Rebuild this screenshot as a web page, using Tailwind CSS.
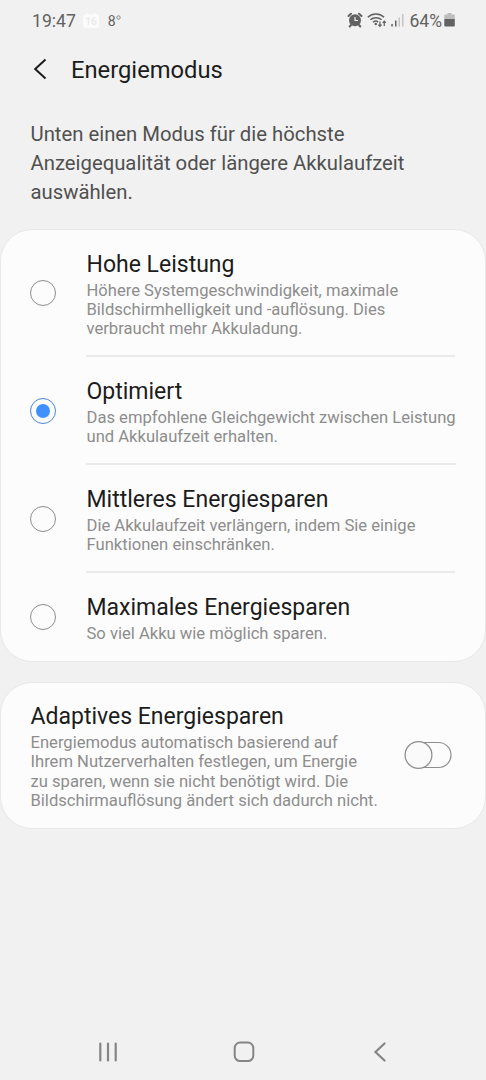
<!DOCTYPE html>
<html lang="de">
<head>
    <meta charset="UTF-8">
    <meta name="viewport" content="width=device-width, initial-scale=1.0">
    <title>Energiemodus</title>

    <script src="https://cdn.jsdelivr.net/npm/@tailwindcss/browser@4"></script>
</head>
<body class="bg-[#f1f1f1] font-[Roboto,sans-serif] text-[#1c1c1c]">
    <div class="flex flex-col w-[486px] h-[1080px] overflow-hidden">

        <!-- Status Bar -->
        <div class="flex items-center justify-between h-[41px] pl-8 pr-[31px] text-[#626262]">
            <div class="flex items-center">
                <span class="text-[17.6px] leading-5">19:47</span>
                <svg class="ml-[6px] w-[18px] h-[18px]" viewBox="0 0 18 18">
                    <path d="M3 2.500h1.500V1h2v1.500h5V1h2v1.500H15a2 2 0 0 1 2 2V14a2 2 0 0 1-2 2H3a2 2 0 0 1-2-2V4.500a2 2 0 0 1 2-2z" fill="#fbfbfb"/>
                    <text x="9" y="13" text-anchor="middle" font-size="10" font-weight="700" fill="#ebebeb">16</text>
                </svg>
                <span class="ml-2 text-[14px] leading-5">8</span>
                <svg class="mb-[6px] w-[5px] h-[5px]" viewBox="0 0 5 5" fill="none" stroke="#7a7a7a" stroke-width=".9">
                    <circle cx="2.500" cy="2.500" r="1.700"/>
                </svg>
            </div>
            <div class="flex items-center">
                <!-- Alarm -->
                <svg class="w-4 h-4 -mt-[2px]" viewBox="0 0 16 16" fill="none">
                    <circle cx="8" cy="8.200" r="6" fill="#626262"/>
                    <path d="M1.500 4 4 1.700M14.500 4 12 1.700M4 13l-1.300 1.500M12 13l1.300 1.500" stroke="#626262" stroke-width="2" stroke-linecap="round"/>
                    <path d="M8 5v3.500h3" stroke="#f1f1f1" stroke-width="1.200"/>
                </svg>
                <!-- WLAN -->
                <svg class="ml-[4px] w-[20px] h-4 -mt-[2px]" viewBox="0 0 19 16" preserveAspectRatio="none" fill="none" stroke="#626262">
                    <path d="M.8 5.200C5.200.9 11.800.9 16.200 5.200M3.200 7.800c3-2.900 7.600-2.900 10.600 0M5.700 10.300c1.500-1.400 3.600-1.400 4.900-.2" stroke-width="1.500"/>
                    <circle cx="8.300" cy="12" r="1.200" fill="#626262" stroke="none"/>
                    <path d="M12.300 9.500v4.800M10.800 12.700l1.500 1.600 1.500-1.600M16.400 14v-4.800M14.900 10.800l1.500-1.600 1.500 1.600" stroke-width="1.200"/>
                </svg>
                <!-- Signal -->
                <svg class="ml-[4px] mr-px w-[13px] h-4 -mt-px" viewBox="0 0 13 16">
                    <path d="M.3 12H1.800V14.500H.3zM4 8.500h1.500v6H4z" fill="#626262"/>
                    <path d="M7.500 5.500H9v9H7.500zM11 2h1.500v12.500H11z" fill="#c4c4c4"/>
                </svg>
                <span class="ml-[5px] text-[17.5px] leading-5">64%</span>
                <!-- Battery -->
                <svg class="ml-[2px] w-[11px] h-4 -mt-[2px]" viewBox="0 0 11 16">
                    <path d="M3.500 1h4v1.500H10a.8.8 0 0 1 .8.8V7H.3V3.300a.8.8 0 0 1 .8-.8h2.400z" fill="#bdbdbd"/>
                    <path d="M.3 7h10.500v6.700a.8.8 0 0 1-.8.8H1.100a.8.8 0 0 1-.8-.8z" fill="#626262"/>
                </svg>
            </div>
        </div>

        <!-- Header -->
        <header class="flex items-center h-14 pl-8">
            <svg class="w-4 h-6" viewBox="0 0 16 24" fill="none" stroke="#1c1c1c" stroke-width="2">
                <path d="M13.500 2.500 3.200 12l10.300 9.500"/>
            </svg>
            <h1 class="ml-[23px] mt-px text-[23.75px] leading-7">Energiemodus</h1>
        </header>

        <p class="mt-[23px] pl-[30.5px] text-[20.3px] leading-[29px] text-[#505050]">
            Unten einen Modus für die höchste<br>
            Anzeigequalität oder längere Akkulaufzeit<br>
            auswählen.
        </p>

        <!-- Mode List -->
        <section class="mt-[22px] h-[433px] shrink-0 rounded-[32px] border border-[#e8e8e8] bg-[#fcfcfc] pl-[29px] pr-[30px]">
            <label class="flex items-center">
                <span class="w-[26px] h-[26px] shrink-0 rounded-full border border-[#8d8d8d]"></span>
                <span class="ml-[30px] flex-1 border-b-2 border-[#ebebeb] pl-[0.5px] pt-[19.5px] pb-[16.2px]">
                    <span class="block text-[23px] leading-[30px]">Hohe Leistung</span>
                    <span class="block pt-[1.4px] text-[16.6px] leading-[19.3px] text-[#8d8d8d] whitespace-nowrap">Höhere Systemgeschwindigkeit, maximale<br>Bildschirmhelligkeit und -auflösung. Dies<br>verbraucht mehr Akkuladung.</span>
                </span>
            </label>
            <label class="flex items-center">
                <span class="flex items-center justify-center w-[26px] h-[26px] shrink-0 rounded-full border-[1.5px] border-[#4a86d8]">
                    <span class="w-[14px] h-[14px] rounded-full bg-[#3e91ff]"></span>
                </span>
                <span class="ml-[30px] flex-1 border-b-2 border-[#ebebeb] pl-[0.5px] pt-[19.8px] pb-[16.2px]">
                    <span class="block text-[23px] leading-[30px]">Optimiert</span>
                    <span class="block pt-[1.4px] text-[16.6px] leading-[19.3px] text-[#8d8d8d] whitespace-nowrap">Das empfohlene Gleichgewicht zwischen Leistung<br>und Akkulaufzeit erhalten.</span>
                </span>
            </label>
            <label class="flex items-center">
                <span class="w-[26px] h-[26px] shrink-0 rounded-full border border-[#8d8d8d]"></span>
                <span class="ml-[30px] flex-1 border-b-2 border-[#ebebeb] pl-[0.5px] pt-[19.8px] pb-[16.2px]">
                    <span class="block text-[23px] leading-[30px]">Mittleres Energiesparen</span>
                    <span class="block pt-[1.4px] text-[16.6px] leading-[19.3px] text-[#8d8d8d] whitespace-nowrap">Die Akkulaufzeit verlängern, indem Sie einige<br>Funktionen einschränken.</span>
                </span>
            </label>
            <label class="flex items-center">
                <span class="w-[26px] h-[26px] shrink-0 rounded-full border border-[#8d8d8d]"></span>
                <span class="ml-[30px] flex-1 pl-[0.5px] pt-5 pb-[18px]">
                    <span class="block text-[23px] leading-[30px]">Maximales Energiesparen</span>
                    <span class="block pt-[0.6px] text-[16.6px] leading-[19.3px] text-[#8d8d8d] whitespace-nowrap">So viel Akku wie möglich sparen.</span>
                </span>
            </label>
        </section>

        <!-- Adaptive Mode -->
        <section class="mt-5 h-[147px] flex items-center justify-between rounded-[32px] border border-[#e8e8e8] bg-[#fcfcfc] pl-[29.5px] pr-[33px]">
            <div>
                <h2 class="text-[23px] leading-[30px]">Adaptives Energiesparen</h2>
                <p class="pt-[1.5px] -mb-[0.7px] text-[16.6px] leading-[19.3px] text-[#8d8d8d] whitespace-nowrap">Energiemodus automatisch basierend auf<br>Ihrem Nutzerverhalten festlegen, um Energie<br>zu sparen, wenn sie nicht benötigt wird. Die<br>Bildschirmauflösung ändert sich dadurch nicht.</p>
            </div>
            <svg class="w-12 h-7 mb-[2px] shrink-0" viewBox="0 0 48 28" stroke="#8d8d8d" stroke-width="1.200">
                <rect x="1.500" y="1.500" width="45.500" height="25" rx="12.500" fill="#fcfcfc"/>
                <circle cx="14.500" cy="14" r="13.400" fill="#fafafa"/>
            </svg>
        </section>

        <!-- Navigation Bar -->
        <nav class="mt-auto h-14 flex items-center pl-[98px]">
            <svg class="w-5 h-5" viewBox="0 0 20 20" stroke="#858585" stroke-width="2.200" stroke-linecap="round">
                <path d="M2.300 1.500v17M10 1.500v17M17.700 1.500v17"/>
            </svg>
            <svg class="ml-[115px] w-[22px] h-[22px]" viewBox="0 0 22 22" fill="none" stroke="#858585" stroke-width="2">
                <rect x="1.700" y="1.500" width="18.600" height="18.600" rx="5.500"/>
            </svg>
            <svg class="ml-[117px] w-4 h-5" viewBox="0 0 16 20" fill="none" stroke="#858585" stroke-width="2.200" stroke-linecap="round">
                <path d="M12.500 1.500 3.500 10l9 8.500"/>
            </svg>
        </nav>
    </div>
</body>
</html>
